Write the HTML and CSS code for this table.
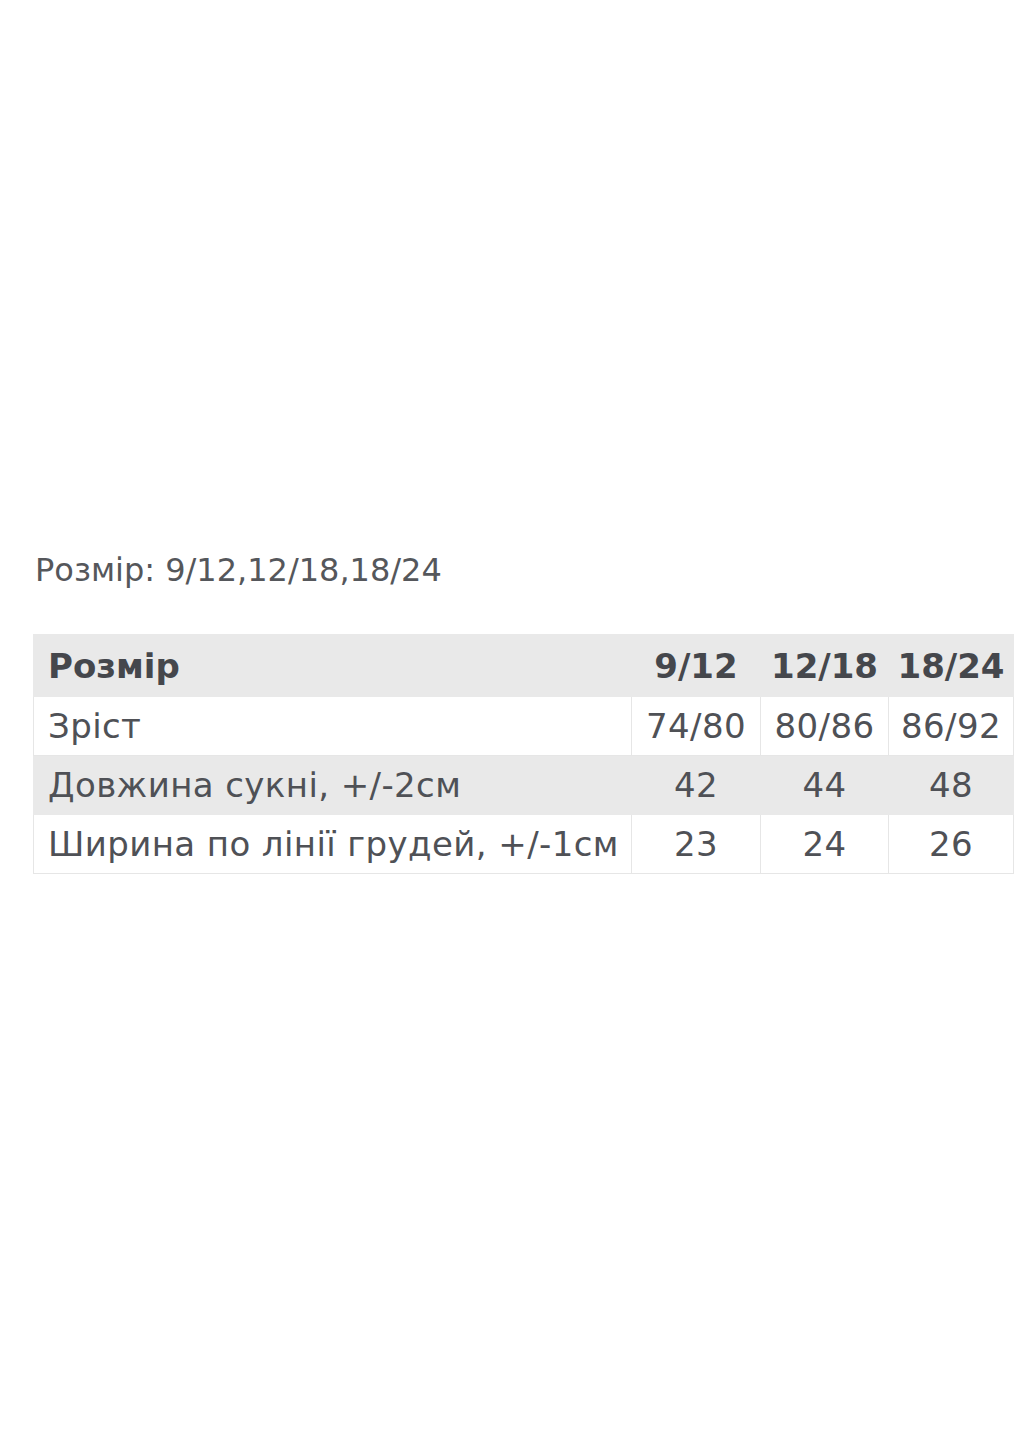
FILE: index.html
```html
<!DOCTYPE html>
<html lang="uk">
<head>
<meta charset="utf-8">
<title>Розмір</title>
<link rel="stylesheet" href="styles.css">
</head>
<body>
<div class="page">
  <p class="sizes">Розмір: 9/12,12/18,18/24</p>
  <table class="chart">
    <tr class="head">
      <th class="label">Розмір</th>
      <th>9/12</th>
      <th>12/18</th>
      <th>18/24</th>
    </tr>
    <tr>
      <td class="label">Зріст</td>
      <td>74/80</td>
      <td>80/86</td>
      <td>86/92</td>
    </tr>
    <tr class="shade">
      <td class="label">Довжина сукні, +/-2см</td>
      <td>42</td>
      <td>44</td>
      <td>48</td>
    </tr>
    <tr>
      <td class="label">Ширина по лінії грудей, +/-1см</td>
      <td>23</td>
      <td>24</td>
      <td>26</td>
    </tr>
  </table>
</div>
</body>
</html>
```

FILE: styles.css
```css
html, body {
  margin: 0;
  padding: 0;
  background: #ffffff;
}

.page {
  padding: 548px 21px 0 33px;
  font-family: "DejaVu Sans", "Noto Sans", sans-serif;
  color: #4f5156;
}

.sizes {
  margin: 0 0 42px 2px;
  font-size: 32px;
  line-height: 44px;
  color: #55575b;
}

.chart {
  width: 981px;
  border-collapse: collapse;
  font-size: 34px;
  letter-spacing: 0.4px;
}

.chart th,
.chart td {
  padding: 0;
  text-align: center;
  border: 1px solid #e6e6e6;
  height: 58px;
}

.chart .label {
  text-align: left;
  padding-left: 14px;
  width: 583px;
}

.chart th {
  font-weight: bold;
  height: 61px;
  color: #45474c;
  letter-spacing: 0;
}

.head th,
.shade td {
  background: #e9e9e9;
  border-color: #e9e9e9;
}

.chart td:nth-child(2), .chart th:nth-child(2) { width: 128px; }
.chart td:nth-child(3), .chart th:nth-child(3) { width: 127px; }
```
